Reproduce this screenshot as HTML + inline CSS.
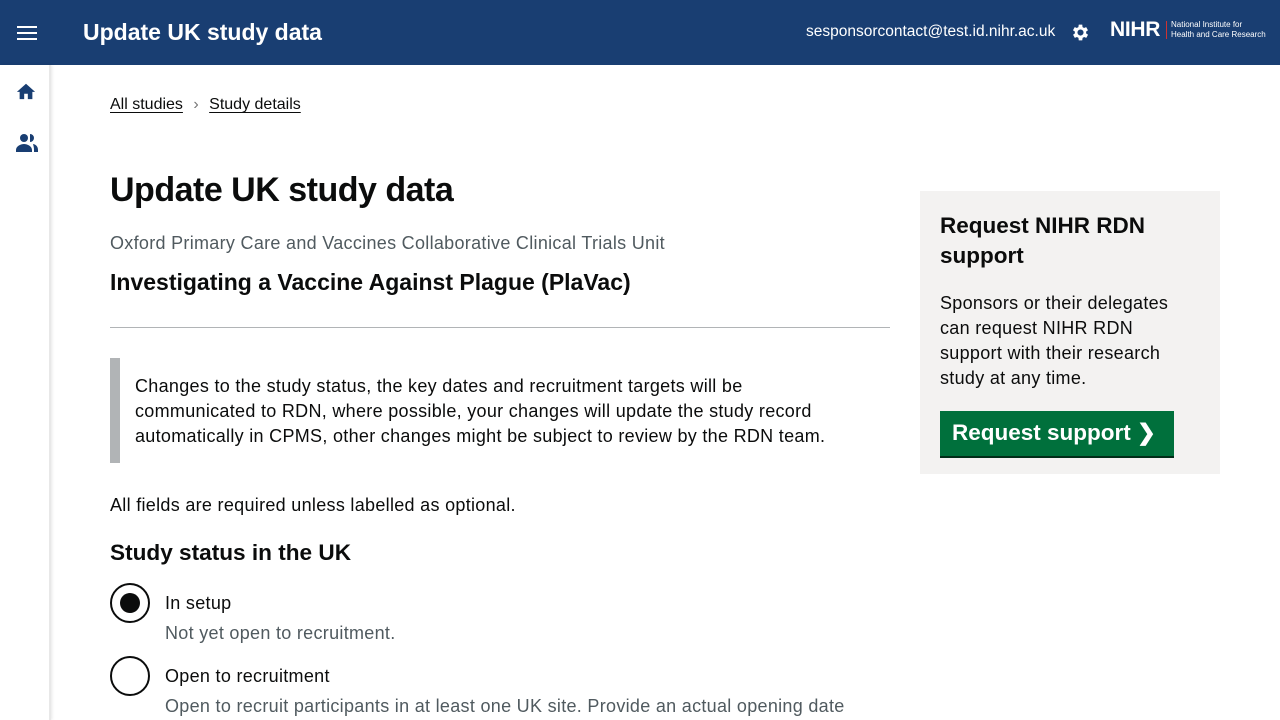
<!DOCTYPE html>
<html><head><meta charset="utf-8"><style>
*{box-sizing:border-box;margin:0;padding:0}
body{width:1280px;height:720px;overflow:hidden;font-family:"Liberation Sans",Arial,sans-serif;color:#0b0c0c;background:#fff;position:relative}
.hdr{position:absolute;left:0;top:0;width:1280px;height:65px;background:#193e72;color:#fff}
.side{position:absolute;left:0;top:65px;width:51px;height:655px;background:#fff;border-right:2px solid #e8e8e8;box-shadow:1px 0 3px rgba(0,0,0,.1)}
.a{position:absolute;white-space:nowrap}
.t{font-size:18px;letter-spacing:.3px}
u{text-decoration:underline;text-underline-offset:3px}
</style></head><body>
<div class="hdr">
<div class="a" style="left:17px;top:26px;width:20px;height:2px;background:#fff;box-shadow:0 6px 0 #fff,0 12px 0 #fff;top:26px"></div>
<div class="a" style="left:83px;top:19px;font-size:23px;font-weight:bold">Update UK study data</div>
<div class="a" style="left:806px;top:23px;font-size:15.5px">sesponsorcontact@test.id.nihr.ac.uk</div>
<svg class="a" style="left:1070px;top:22px" width="21" height="21" viewBox="0 0 24 24"><path fill="#fff" d="M19.4 13a7.5 7.5 0 0 0 0-2l2.1-1.6-2-3.5-2.5 1a7 7 0 0 0-1.7-1L15 3h-4l-.4 2.9a7 7 0 0 0-1.7 1l-2.5-1-2 3.5L6.6 11a7.5 7.5 0 0 0 0 2l-2.1 1.6 2 3.5 2.5-1a7 7 0 0 0 1.7 1L11 21h4l.4-2.9a7 7 0 0 0 1.7-1l2.5 1 2-3.5zM13 15.5a3.5 3.5 0 1 1 0-7 3.5 3.5 0 0 1 0 7z" transform="translate(-1 0)"/></svg>
<div class="a" style="left:1110px;top:18px;font-size:21px;font-weight:bold;letter-spacing:-.3px">NIHR</div>
<div class="a" style="left:1166px;top:21px;width:1px;height:18px;background:#c33"></div>
<div class="a" style="left:1171px;top:20px;font-size:8px;line-height:10px">National Institute for<br>Health and Care Research</div>
</div>
<div class="side">
<svg class="a" style="left:15px;top:16px" width="22" height="20" viewBox="0 0 24 22"><path fill="#193e72" d="M10 20v-6h4v6h5v-8h3L12 3 2 12h3v8z"/></svg>
<svg class="a" style="left:15px;top:68px" width="24" height="20" viewBox="0 0 24 20"><circle cx="9" cy="5" r="4" fill="#193e72"/><path fill="#193e72" d="M1 17c0-4 5-6 8-6s8 2 8 6v2H1zM15 1a4 4 0 0 1 0 8zM18 11c3 .5 5 2.5 5 6v2h-4v-2c0-2.5-.5-4-1-6z"/></svg>
</div>
<div class="a" style="left:110px;top:96px;font-size:16px"><u>All studies</u> <span style="color:#777;margin:0 6px">›</span> <u>Study details</u></div>
<div class="a" style="left:110px;top:171px;font-size:34px;font-weight:bold;letter-spacing:-.5px">Update UK study data</div>
<div class="a t" style="left:110px;top:233px;color:#505a5f">Oxford Primary Care and Vaccines Collaborative Clinical Trials Unit</div>
<div class="a" style="left:110px;top:269px;font-size:23px;font-weight:bold">Investigating a Vaccine Against Plague (PlaVac)</div>
<div class="a" style="left:110px;top:327px;width:780px;height:1px;background:#b1b4b6"></div>
<div class="a" style="left:110px;top:358px;width:10px;height:105px;background:#b1b4b6"></div>
<div class="a t" style="left:135px;top:374px;line-height:25px">Changes to the study status, the key dates and recruitment targets will be<br>communicated to RDN, where possible, your changes will update the study record<br>automatically in CPMS, other changes might be subject to review by the RDN team.</div>
<div class="a t" style="left:110px;top:495px">All fields are required unless labelled as optional.</div>
<div class="a" style="left:110px;top:540px;font-size:22.6px;font-weight:bold">Study status in the UK</div>
<div class="a" style="left:110px;top:583px;width:40px;height:40px;border:2px solid #0b0c0c;border-radius:50%"><div style="margin:8px;width:20px;height:20px;border-radius:50%;background:#0b0c0c"></div></div>
<div class="a t" style="left:165px;top:593px">In setup</div>
<div class="a t" style="left:165px;top:623px;color:#505a5f">Not yet open to recruitment.</div>
<div class="a" style="left:110px;top:656px;width:40px;height:40px;border:2px solid #0b0c0c;border-radius:50%"></div>
<div class="a t" style="left:165px;top:666px">Open to recruitment</div>
<div class="a t" style="left:165px;top:696px;color:#505a5f">Open to recruit participants in at least one UK site. Provide an actual opening date</div>
<div class="a" style="left:920px;top:191px;width:300px;height:283px;background:#f3f2f1"></div>
<div class="a" style="left:940px;top:211px;font-size:22.5px;font-weight:bold;line-height:30px">Request NIHR RDN<br>support</div>
<div class="a t" style="left:940px;top:291px;line-height:25px">Sponsors or their delegates<br>can request NIHR RDN<br>support with their research<br>study at any time.</div>
<div class="a" style="left:940px;top:411px;width:234px;height:45px;background:#00703c;box-shadow:0 2px 0 #002d18;color:#fff;font-size:22.5px;font-weight:bold;padding:9px 12px">Request support <span>❯</span></div>
</body></html>
